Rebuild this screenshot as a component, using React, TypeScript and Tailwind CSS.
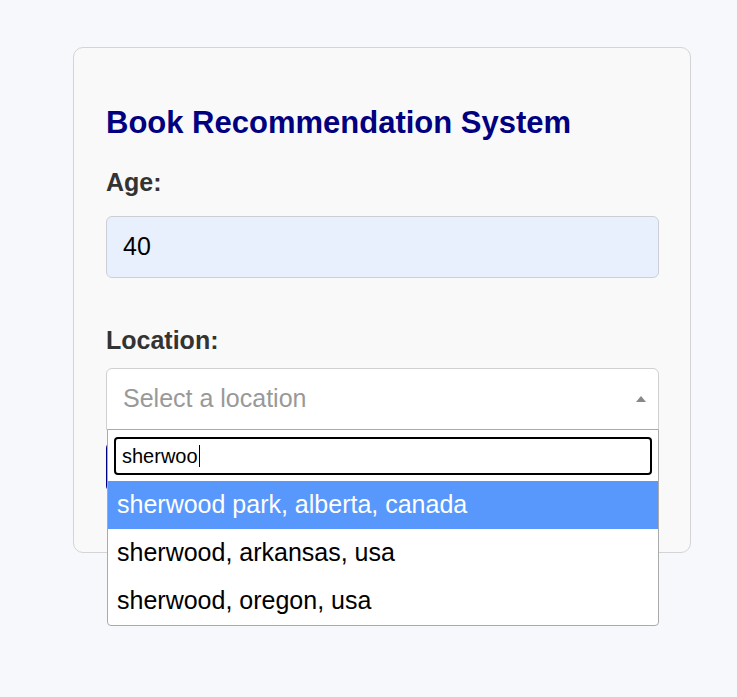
const OPTIONS = ['sherwood park, alberta, canada', 'sherwood, arkansas, usa', 'sherwood, oregon, usa']

export default function App() {
  return (
    <div className="min-h-[697px] bg-[#f7f8fb] pt-[47px] pl-[73px] font-['Liberation_Sans',Arial,sans-serif]">
      <div className="w-[618px] rounded-[10px] border border-[#d4d4d8] bg-[#f9f9f9] pl-[32px] pr-[31px] pt-[55px] pb-[60px]">
        <h2 className="text-[31px] leading-[40px] font-bold text-[#000080]">Book Recommendation System</h2>

        <label className="mt-[24px] block text-[25px] leading-[30px] font-bold text-[#333]">Age:</label>
        <div className="mt-[19px] flex h-[62px] items-center rounded-[6px] border border-[#ccd0d6] bg-[#e8f0fe] px-[16px] text-[25px] text-black">
          40
        </div>

        <label className="mt-[47px] block text-[25px] leading-[30px] font-bold text-[#333]">Location:</label>
        <div className="relative mt-[13px]">
          <div className="flex h-[62px] items-center justify-between rounded-t-[6px] border border-[#d0d0d0] bg-white pl-[16px] pr-[12px] text-[25px] text-[#999]">
            <span>Select a location</span>
            <span className="h-0 w-0 border-x-[5px] border-b-[6px] border-x-transparent border-b-[#888]" />
          </div>

          {/* open select2-style dropdown */}
          <div className="absolute top-[61px] left-px right-0 z-10 rounded-b-[4px] border border-[#aaa] bg-white">
            <div className="px-[6px] pt-[7px] pb-[6px]">
              <div className="flex h-[38px] items-center rounded-[4px] border-2 border-black px-[6px] text-[20px] text-black">
                sherwoo<span className="ml-px h-[22px] w-px bg-black" />
              </div>
            </div>
            {OPTIONS.map((o, i) => (
              <div
                key={o}
                className={`flex h-[48px] items-center px-[9px] text-[25px] ${i === 0 ? 'bg-[#5897fb] text-white' : 'text-black'}`}
              >
                {o}
              </div>
            ))}
          </div>
        </div>

        <button className="mt-[12px] h-[50px] w-full rounded-[6px] bg-[#000080] text-[24px] font-bold text-white">
          Recommend
        </button>
      </div>
    </div>
  )
}
